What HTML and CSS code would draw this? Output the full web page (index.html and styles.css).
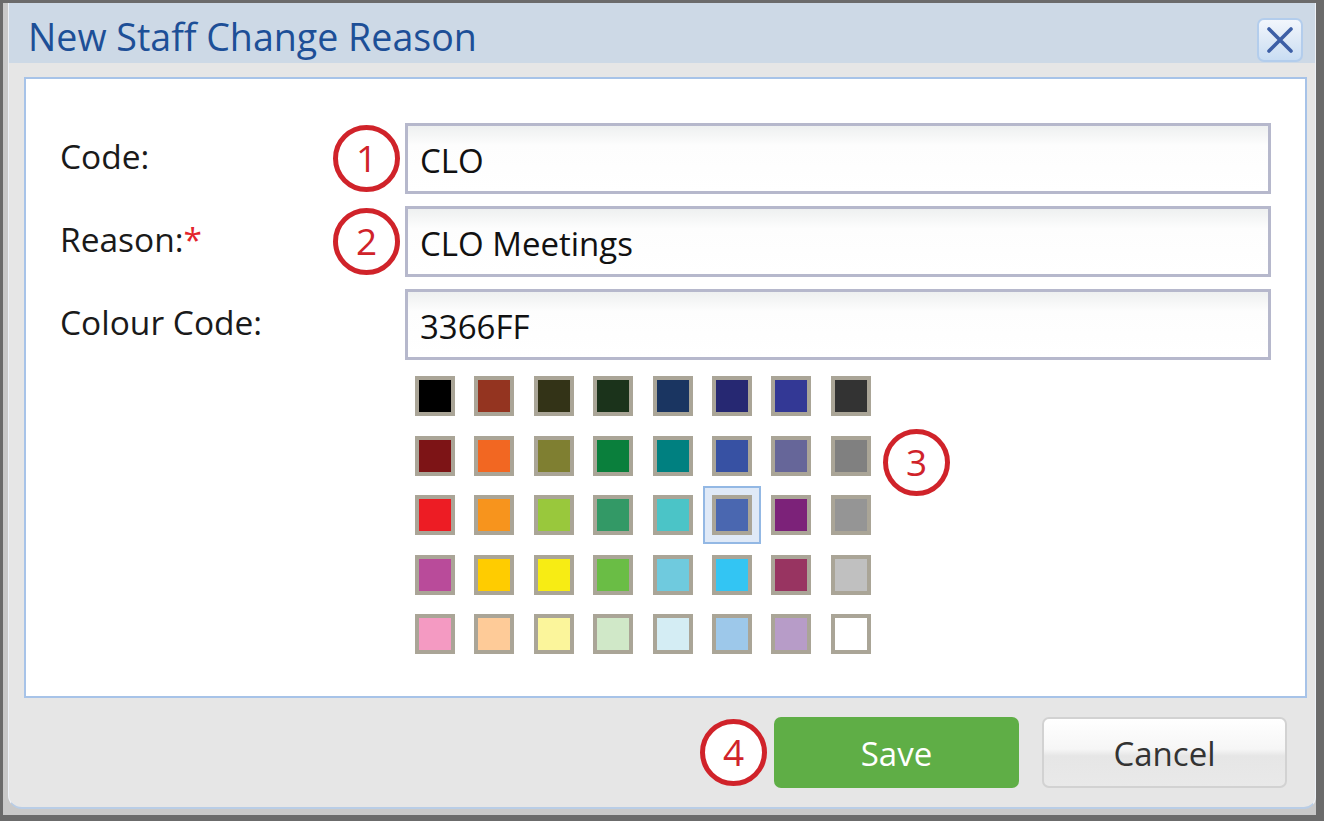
FILE: index.html
```html
<!DOCTYPE html>
<html lang="en">
<head>
  <meta charset="UTF-8">
  <title>New Staff Change Reason</title>
  <link rel="stylesheet" href="styles.css">
</head>
<body>
  <div class="frame">
    <div class="page">
      <div class="dialog">
        <div class="titlebar">
          <h1>New Staff Change Reason</h1>
          <button type="button" class="close" aria-label="Close">
            <svg width="30" height="30" viewBox="0 0 30 30">
              <path d="M4 4 L26 26 M26 4 L4 26" stroke="#3d5fa6" stroke-width="3.6" stroke-linecap="round" fill="none"/>
            </svg>
          </button>
        </div>

        <div class="dialog-body">
          <div class="panel">
            <div class="row">
              <label>Code:</label>
              <span class="mark mark-row">1</span>
              <input class="field" value="CLO">
            </div>
            <div class="row">
              <label>Reason:<span class="req">*</span></label>
              <span class="mark mark-row">2</span>
              <input class="field" value="CLO Meetings">
            </div>
            <div class="row">
              <label>Colour Code:</label>
              <input class="field" value="3366FF">
            </div>

            <div class="palette">
              <div class="swatches" id="swatches"></div>
              <span class="mark mark-palette">3</span>
            </div>
          </div>

          <div class="footer">
            <span class="mark">4</span>
            <button type="button" class="btn save">Save</button>
            <button type="button" class="btn cancel">Cancel</button>
          </div>
        </div>
      </div>
    </div>
  </div>

  <script>
    const cores = [
      "#000000", "#943420", "#333317", "#1b331b", "#1a3561", "#262872", "#333895", "#333333",
      "#7d1416", "#f26722", "#7f7f31", "#0a7f3c", "#008080", "#3751a3", "#666699", "#808080",
      "#ed1c24", "#f7941d", "#99c83c", "#339966", "#4bc4c7", "#4a67b0", "#7c2279", "#959595",
      "#b94b9a", "#ffcc00", "#f7ec14", "#6abd45", "#6fcade", "#33c5f3", "#983461", "#c0c0c0",
      "#f49ac2", "#fecb98", "#fbf59b", "#d0e8c8", "#d4edf4", "#9dc8ea", "#b79cc8", "#ffffff"
    ];

    const grade = document.getElementById("swatches");
    cores.forEach((cor, i) => {
      const s = document.createElement("span");
      s.className = i === 21 ? "swatch selected" : "swatch";
      s.style.background = cor;
      grade.appendChild(s);
    });
  </script>
</body>
</html>
```

FILE: styles.css
```css
* {
  box-sizing: border-box;
}
body {
  margin: 0;
  background-color: #6b6b6b;
  font-family: "Open Sans", Arial, sans-serif;
}
.frame {
  width: 1324px;
  height: 821px;
  padding: 3px 8px 6px 3px;
  background-color: #6b6b6b;
}
.page {
  height: 100%;
  background-color: #c9c9c9;
  padding-left: 5px;
}
.dialog {
  height: 806px;
  display: flex;
  flex-direction: column;
  background-color: #e6e6e6;
  border-left: 1px solid #eef2f8;
  border-right: 1px solid #eef2f8;
  border-bottom: 2px solid #b9cde6;
  border-radius: 0 0 12px 14px;
  overflow: hidden;
}
.titlebar {
  height: 60px;
  display: flex;
  justify-content: space-between;
  align-items: flex-end;
  padding: 0 12px 0 19px;
  background-color: #cdd9e6;
}
h1 {
  margin: 0;
  font-size: 37.6px;
  font-weight: normal;
  color: #1d4f97;
  line-height: 52px;
}
.close {
  width: 46px;
  height: 44px;
  padding: 0;
  margin-bottom: 1px;
  display: flex;
  align-items: center;
  justify-content: center;
  border: 2px solid #b3cdec;
  border-radius: 7px;
  background: linear-gradient(#f2f6fc, #dce8f6 55%, #c9ddf3);
  cursor: pointer;
}
.dialog-body {
  flex: 1;
  display: flex;
  flex-direction: column;
  padding: 14px 8px 0 15px;
}
.panel {
  height: 621px;
  background-color: #fff;
  border: 2px solid #a7c3e8;
  padding: 44px 34px 0 34px;
}
.row {
  position: relative;
  display: flex;
  align-items: center;
  margin-bottom: 12px;
}
.row label {
  width: 345px;
  flex: none;
  font-size: 33.5px;
  color: #1a1a1a;
  padding-bottom: 6px;
}
.req {
  color: #e3242b;
}
.field {
  flex: 1;
  height: 71px;
  padding: 4px 12px 0;
  border: 3px solid #b6b8cc;
  background: linear-gradient(#eef0f0, #fdfdfd 30%, #fff);
  font-family: "Open Sans", Arial, sans-serif;
  font-size: 33px;
  color: #111;
  outline: none;
}
.mark {
  width: 67px;
  height: 67px;
  flex: none;
  display: flex;
  align-items: center;
  justify-content: center;
  border: 5px solid #d0232a;
  border-radius: 50%;
  background-color: #fff;
  color: #d0232a;
  font-size: 37px;
  line-height: 1;
  padding-bottom: 2px;
}
.mark-row {
  position: absolute;
  left: 273px;
  top: 2px;
}
.palette {
  position: relative;
  margin: 16px 0 0 355px;
}
.swatches {
  display: grid;
  grid-template-columns: repeat(8, 40px);
  column-gap: 19.4px;
  row-gap: 19.5px;
}
.swatch {
  width: 40px;
  height: 40px;
  border: 4px solid #aaa597;
}
.swatch.selected {
  box-shadow: 0 0 0 7px #dfe9f7, 0 0 0 9px #93b8e4;
}
.mark-palette {
  position: absolute;
  left: 468px;
  top: 53px;
}
.footer {
  display: flex;
  justify-content: flex-end;
  align-items: center;
  gap: 23px;
  padding: 19px 20px 0 0;
}
.footer .mark {
  margin-right: -16px;
}
.btn {
  width: 245px;
  height: 71px;
  border-radius: 7px;
  font-family: "Open Sans", Arial, sans-serif;
  font-size: 33px;
  padding: 2px 0 0;
  cursor: pointer;
}
.save {
  border: none;
  background-color: #5fae46;
  color: #fff;
}
.cancel {
  border: 2px solid #d2d2d2;
  background: linear-gradient(#fff, #f6f6f6 45%, #e6e6e6 55%, #e9e9e9);
  color: #333;
}
```
